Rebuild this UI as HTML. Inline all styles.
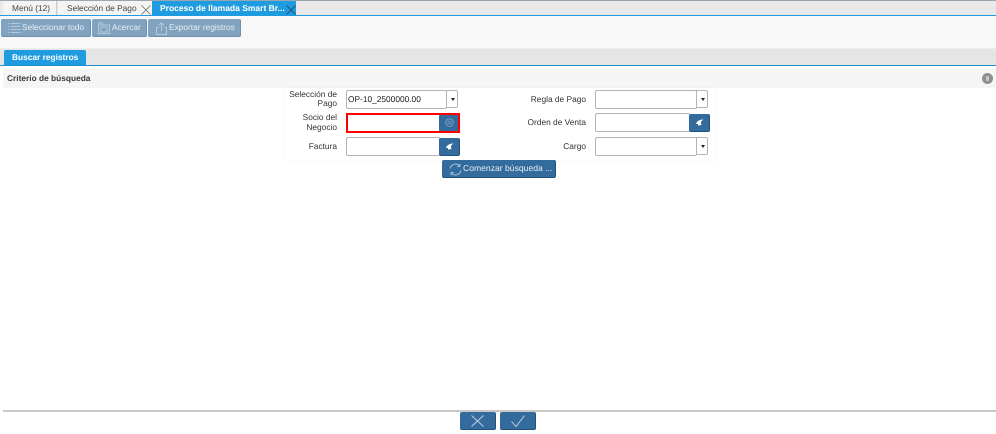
<!DOCTYPE html>
<html lang="es">
<head>
<meta charset="utf-8">
<style>
html,body{margin:0;padding:0;background:#fff}
body{width:996px;height:434px;position:relative;overflow:hidden;font-family:"Liberation Sans",sans-serif;font-size:8.35px;color:#333;text-rendering:geometricPrecision;filter:blur(.25px)}
.a{position:absolute;box-sizing:border-box}
.t{position:absolute;white-space:nowrap;line-height:11px}
.r{text-align:right}
.inp{position:absolute;box-sizing:border-box;background:#fff;border:1px solid #b4b4b4;border-radius:2px}
.arrow{position:absolute;box-sizing:border-box;background:#fff;border:1px solid #b4b4b4;border-radius:0 2px 2px 0;width:12px}
.arrow:after{content:"";position:absolute;left:4px;top:7px;border-left:2.5px solid transparent;border-right:2.5px solid transparent;border-top:3px solid #222}
.btn{position:absolute;box-sizing:border-box;background:#336b9d;border-radius:2px;border-right:1px solid #25527a;border-bottom:1px solid #25527a}
.tb{position:absolute;box-sizing:border-box;top:19px;height:18px;background:#82a3bf;border-radius:2px;color:#e8eef4;font-size:8.35px;line-height:16px;border-right:1px solid #6d90ae;border-bottom:1px solid #6d90ae}
svg{position:absolute;overflow:visible}
</style>
</head>
<body>
<!-- tab strip -->
<div class="a" style="left:0;top:0;width:996px;height:1px;background:#9aa7b0"></div>
<div class="a" style="left:0;top:1px;width:996px;height:14px;background:#e9e9e9"></div>
<div class="a" style="left:3px;top:1px;width:54px;height:14px;background:#f4f4f4;border-right:1px solid #ccc"></div>
<div class="a" style="left:58px;top:1px;width:94px;height:14px;background:#f4f4f4"></div>
<div class="a" style="left:152px;top:1px;width:144px;height:15px;background:#1f9ce0"></div>
<div class="a" style="left:0;top:15px;width:996px;height:1px;background:#1f9ce0"></div>
<div class="t" style="left:12px;top:3px;color:#444">Menú (12)</div>
<div class="t" style="left:67px;top:3px;color:#444">Selección de Pago</div>
<svg style="left:141px;top:5px" width="10" height="10"><path d="M0.500 0.500L9.500 9.500M9.500 0.500L0.500 9.500" stroke="#666" stroke-width="0.8" fill="none"/></svg>
<div class="t" style="left:160px;top:3px;color:#fff;font-weight:bold;font-size:8.5px">Proceso de llamada Smart Br...</div>
<svg style="left:286px;top:5px" width="10" height="10"><path d="M0.500 0.500L9.500 9.500M9.500 0.500L0.500 9.500" stroke="#23506f" stroke-width="0.9" fill="none"/></svg>

<!-- toolbar -->
<div class="a" style="left:0;top:16px;width:996px;height:32px;background:#f8f8f8"></div>
<div class="tb" style="left:1px;width:90px"><span class="t" style="left:21px;top:3px">Seleccionar todo</span>
<svg style="left:7px;top:3px" width="13" height="12"><path d="M0 1.500H1.500M3 1.500H12.500M0 4.500H1.500M3 4.500H12.500M0 7.500H1.500M3 7.500H12.500M0 10.500H1.500M3 10.500H12.500" stroke="#b6c9d9" stroke-width="1" fill="none"/></svg></div>
<div class="tb" style="left:92px;width:55px"><span class="t" style="left:20px;top:3px">Acercar</span>
<svg style="left:6px;top:3px" width="12" height="12"><path d="M0.500 3V11.500H11.500V3H5L4 1H1L0.500 3ZM0.500 3H11.500" stroke="#b6c9d9" stroke-width="1" fill="none"/><rect x="3" y="5" width="6" height="5" stroke="#b6c9d9" fill="none"/></svg></div>
<div class="tb" style="left:148px;width:93px"><span class="t" style="left:21px;top:3px">Exportar registros</span>
<svg style="left:8px;top:3px" width="11" height="13"><path d="M3 5.500H0.500V12.500H10.500V5.500H8M5.500 9V1M2.800 3.500L5.500 0.800L8.200 3.500" stroke="#b6c9d9" stroke-width="1" fill="none"/></svg></div>

<!-- search tab -->
<div class="a" style="left:0;top:48px;width:996px;height:17px;background:#e5e5e5;border-top:1px solid #eee"></div>
<div class="a" style="left:4px;top:50px;width:82px;height:16px;background:#1f9ce0;border-radius:2px 2px 0 0"></div>
<div class="t" style="left:12px;top:52px;color:#fff;font-weight:bold">Buscar registros</div>
<div class="a" style="left:0;top:65px;width:996px;height:1px;background:#1f8fcf"></div>

<!-- panel title -->
<div class="a" style="left:3px;top:69px;width:993px;height:19px;background:#f5f5f5"></div>
<div class="t" style="left:7px;top:73px;font-weight:bold;color:#3a3a3a">Criterio de búsqueda</div>
<div class="a" style="left:982px;top:73px;width:11px;height:11px;border-radius:50%;background:#8f8f8f"></div>
<div class="a" style="left:986px;top:76px;width:3px;height:5px;background:#c8c8c8;border-radius:1px"></div>

<!-- form background edge -->
<div class="a" style="left:285px;top:88px;width:431px;height:73px;background:#fff;box-shadow:0 0 3px rgba(0,0,0,.05)"></div>

<!-- labels left -->
<div class="t r" style="left:260px;top:89.500px;width:77px;line-height:9.500px">Selección de<br>Pago</div>
<div class="t r" style="left:260px;top:113px;width:77px;line-height:9.500px">Socio del<br>Negocio</div>
<div class="t r" style="left:260px;top:141px;width:77px">Factura</div>

<!-- left fields -->
<div class="inp" style="left:346px;top:90px;width:101px;height:19px"></div>
<div class="t" style="left:348px;top:94px;color:#222">OP-10_2500000.00</div>
<div class="arrow" style="left:446px;top:90px;height:18px"></div>

<div class="a" style="left:346px;top:113px;width:114px;height:20px;background:#fff;border:2px solid #f00"></div>
<div class="a" style="left:439px;top:115px;width:19px;height:16px;background:#336b9d"></div>
<svg style="left:445px;top:118px" width="9" height="9"><circle cx="4.500" cy="4.500" r="3.800" stroke="#7c9fbe" fill="none"/><rect x="3" y="3.300" width="3" height="2.400" stroke="#7c9fbe" stroke-width=".8" fill="none"/></svg>

<div class="inp" style="left:346px;top:137px;width:94px;height:19px"></div>
<div class="btn" style="left:439px;top:138px;width:21px;height:18px"></div>
<svg style="left:445px;top:143px" width="10" height="8"><path d="M8.500 0.500C6 0.500 3.500 1.200 1.800 3.200L1 5L3 5L3.500 7C4.500 6.400 5.500 6 6.800 5.800C6 5.200 5.700 4.400 6 3.400C6.300 2.200 7.200 1.200 8.500 0.500Z" fill="#fff"/></svg>

<!-- labels right -->
<div class="t r" style="left:500px;top:94px;width:86px">Regla de Pago</div>
<div class="t r" style="left:500px;top:117px;width:86px">Orden de Venta</div>
<div class="t r" style="left:500px;top:141px;width:86px">Cargo</div>

<!-- right fields -->
<div class="inp" style="left:595px;top:90px;width:102px;height:19px"></div>
<div class="arrow" style="left:696px;top:90px;height:18px"></div>

<div class="inp" style="left:595px;top:113px;width:95px;height:19px"></div>
<div class="btn" style="left:689px;top:114px;width:21px;height:18px"></div>
<svg style="left:695px;top:119px" width="10" height="8"><path d="M8.500 0.500C6 0.500 3.500 1.200 1.800 3.200L1 5L3 5L3.500 7C4.500 6.400 5.500 6 6.800 5.800C6 5.200 5.700 4.400 6 3.400C6.300 2.200 7.200 1.200 8.500 0.500Z" fill="#fff"/></svg>

<div class="inp" style="left:595px;top:137px;width:102px;height:19px"></div>
<div class="arrow" style="left:696px;top:137px;height:18px"></div>

<!-- search button -->
<div class="btn" style="left:442px;top:160px;width:114px;height:18px"></div>
<svg style="left:449px;top:163px" width="13" height="13"><path d="M1 5.500C1.600 3 3.800 1 6.500 1C8.300 1 9.800 1.800 10.800 3.200M12 7.500C11.400 10 9.200 12 6.500 12C4.700 12 3.200 11.200 2.200 9.800M10.800 0.800V3.500H8.200M2.200 12.200V9.500H4.800" stroke="#a9c3d9" stroke-width="1" fill="none"/></svg>
<div class="t" style="left:463px;top:163px;color:#e6eef5;font-size:8.6px">Comenzar búsqueda ...</div>

<!-- footer -->
<div class="a" style="left:3px;top:410px;width:993px;height:2px;background:#c8c8c4"></div>
<div class="btn" style="left:460px;top:412px;width:36px;height:18px"></div>
<svg style="left:471px;top:415px" width="13" height="12"><path d="M0.500 0.500L12.500 11.500M12.500 0.500L0.500 11.500" stroke="#c4d5e4" stroke-width="0.900" fill="none"/></svg>
<div class="btn" style="left:500px;top:412px;width:36px;height:18px"></div>
<svg style="left:511px;top:415px" width="14" height="12"><path d="M0.500 6.500L5 11.500L13.500 0.500" stroke="#c4d5e4" stroke-width="0.900" fill="none"/></svg>
</body>
</html>
